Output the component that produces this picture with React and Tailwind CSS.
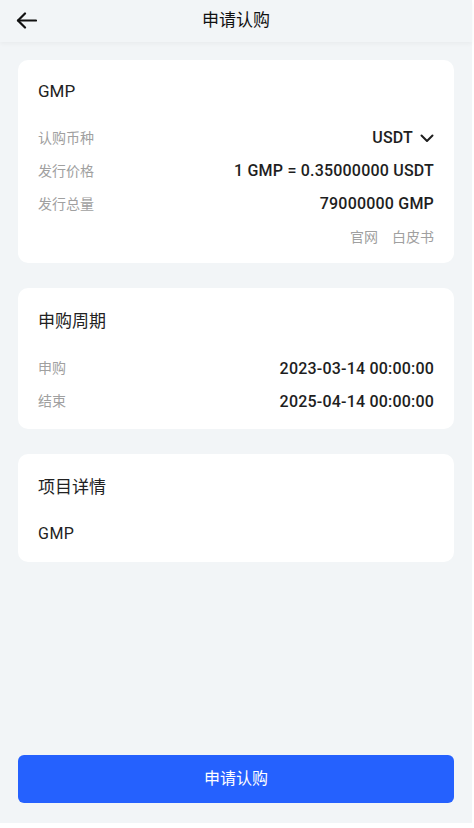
import React from 'react'

const font = { fontFamily: 'Roboto, "Noto Sans CJK SC", sans-serif' }

function Row({ label, children }) {
  return (
    <div className="flex items-center justify-between h-[33px]">
      <span className="text-[14px] text-[#a0a0a0]">{label}</span>
      <span className="text-[16px] font-medium text-[#1e1e1e] tracking-[0.2px]">{children}</span>
    </div>
  )
}

function Card({ title, children, className = '' }) {
  return (
    <div className={`bg-white rounded-[10px] px-5 ${className}`}>
      <div className="text-[17px] text-[#222]">{title}</div>
      {children}
    </div>
  )
}

export default function App() {
  return (
    <div className="w-[472px] h-[823px] bg-[#f2f5f7] flex flex-col" style={font}>
      <header className="h-[42px] flex items-center relative shadow-[0_2px_4px_rgba(0,0,0,0.04)]">
        <button className="absolute left-[16px] top-[12px]">
          <svg width="21" height="17" viewBox="0 0 21 17" fill="none" stroke="#111" strokeWidth="2.2" strokeLinecap="round" strokeLinejoin="round">
            <path d="M20 8.5H2" />
            <path d="M9 1.5L2 8.5L9 15.5" />
          </svg>
        </button>
        <h1 className="w-full text-center text-[17px] text-[#111]">申请认购</h1>
      </header>

      <div className="flex flex-col gap-[25px] px-[18px] pt-[18px]">
        <Card title="GMP" className="pt-[19px] pb-[9px]">
          <div className="mt-[17px]">
            <Row label="认购币种">
              <span className="flex items-center gap-[7px]">
                USDT
                <svg width="14" height="9" viewBox="0 0 14 9" fill="none" stroke="#1e1e1e" strokeWidth="2" strokeLinecap="round" strokeLinejoin="round">
                  <path d="M1.5 1.5L7 7L12.5 1.5" />
                </svg>
              </span>
            </Row>
            <Row label="发行价格">1 GMP = 0.35000000 USDT</Row>
            <Row label="发行总量">79000000 GMP</Row>
            <div className="flex justify-end gap-[14px] h-[33px] items-center text-[14px] text-[#a0a0a0]">
              <span>官网</span>
              <span>白皮书</span>
            </div>
          </div>
        </Card>

        <Card title="申购周期" className="pt-[21px] pb-[11px]">
          <div className="mt-[18px]">
            <Row label="申购">2023-03-14 00:00:00</Row>
            <Row label="结束">2025-04-14 00:00:00</Row>
          </div>
        </Card>

        <Card title="项目详情" className="pt-[21px] pb-[16px]">
          <div className="mt-[21px] text-[16px] text-[#222] tracking-[0.5px]">GMP</div>
        </Card>
      </div>

      <div className="mt-auto px-[18px] pb-[20px]">
        <button className="w-full h-[48px] rounded-[6px] bg-[#2561fe] text-white text-[16px]">申请认购</button>
      </div>
    </div>
  )
}
